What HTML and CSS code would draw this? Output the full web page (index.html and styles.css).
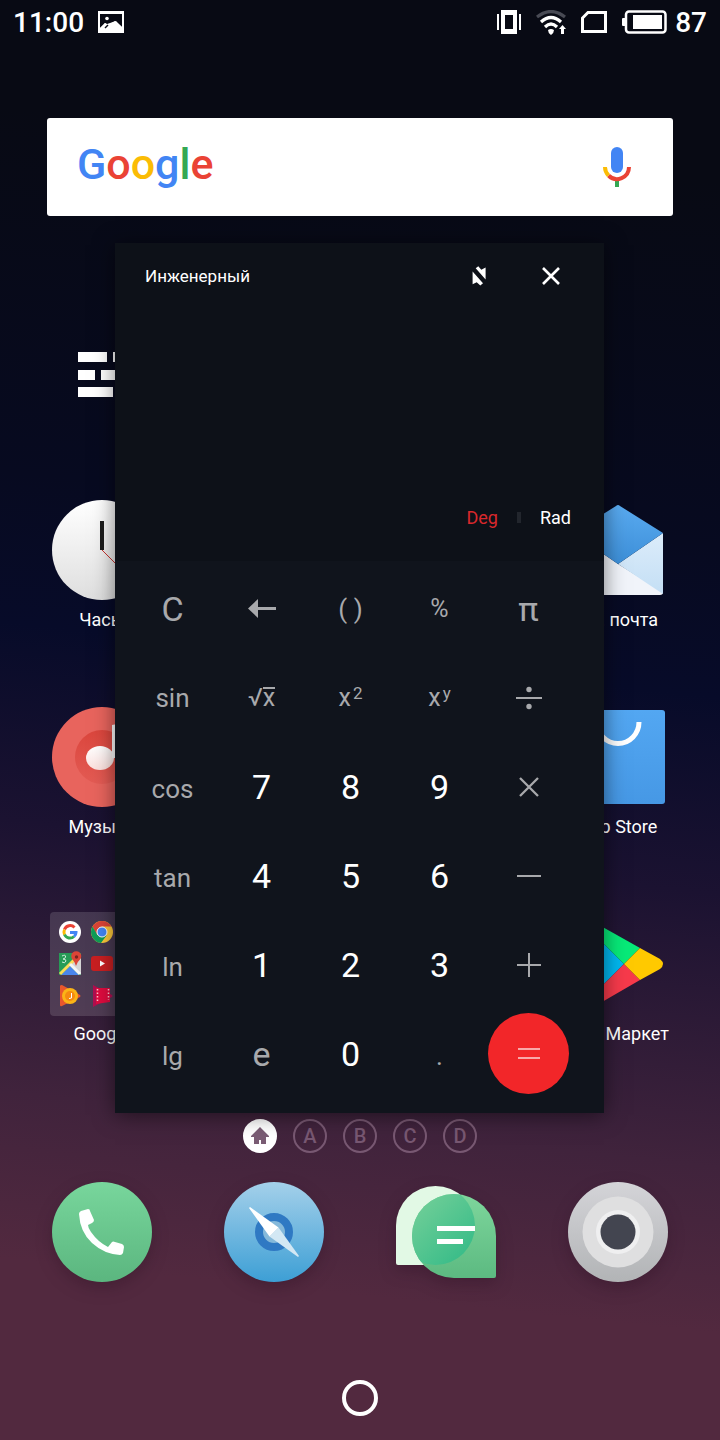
FILE: index.html
```html
<!DOCTYPE html>
<html lang="ru">
<head>
  <meta charset="UTF-8">
  <meta name="viewport" content="width=device-width, initial-scale=1.0">
  <title>Инженерный</title>
  <link rel="stylesheet" href="styles.css">
</head>
<body>
<div class="screen">

  <!-- Status bar -->
  <header class="status-bar">
    <span>11:00</span>
    <svg width="26" height="22" viewBox="0 0 26 22">
      <path fill="#fff" fill-rule="evenodd" d="M0 0H26V22H0zM2 3V17L7 12L10 14L17 10L24 16V3z"/>
      <path fill="#fff" d="M2 19V17L7 12L9 13L18 10L24 16V20H2z"/>
      <path stroke="#080a14" stroke-width="1.500" d="M7 17L10 14"/>
      <circle cx="9" cy="7.500" r="1.800" fill="#fff"/>
    </svg>
    <div class="status-icons">
      <svg width="24" height="24" viewBox="0 0 24 24" fill="#fff">
        <path fill-rule="evenodd" d="M4 0H20V24H4zM8 5V19H16V5z"/>
        <path d="M0 4H2V20H0zM22 4H24V20H22z"/>
      </svg>
      <svg width="30" height="25" viewBox="0 0 30 25" fill="none" stroke="#fff" stroke-width="3.200">
        <path stroke="#484a54" d="M1 7Q15 -4 29 7"/>
        <path d="M5 12Q15 3 25 12"/>
        <path d="M9 17Q15 11 21 17"/>
        <path fill="#fff" stroke="none" d="M12 20Q15 18 18 20Q18 23 15 25Q12 23 12 20zM23 19L26.500 15L30 19H28V24H25V19z"/>
      </svg>
      <svg width="26" height="22" viewBox="0 0 26 22" fill="none" stroke="#fff" stroke-width="3">
        <path d="M7 1.500H24.500V20.500H1.500V7z"/>
      </svg>
      <div class="battery">
        <svg width="45" height="24" viewBox="0 0 45 24">
          <rect x="4" y="1.500" width="39.500" height="21" rx="3" fill="none" stroke="#fff" stroke-width="2.500"/>
          <path fill="#fff" d="M0 9Q0 8 1 8H4V16H1Q0 16 0 15zM11 5H40V19H11z"/>
        </svg>
        <span>87</span>
      </div>
    </div>
  </header>

  <!-- Search widget -->
  <form class="search">
    <label class="logo" for="query"><span class="blue">G</span><span class="red">o</span><span class="yellow">o</span><span class="blue">g</span><span class="green">l</span><span class="red">e</span></label>
    <input class="query" id="query" type="search">
    <button class="mic" type="button" aria-label="Голосовой поиск">
      <svg width="28" height="40" viewBox="0 0 28 40" fill="none" stroke-width="4">
        <rect x="8" y="0" width="12" height="26" rx="6" fill="#4285f4"/>
        <path stroke="#34a853" d="M14 33V40"/>
        <path stroke="#ea4335" d="M26 20A12 12 0 0 1 5.500 28.500"/>
        <path stroke="#fbbc05" d="M2 20A12 12 0 0 0 5.500 28.500"/>
      </svg>
    </button>
  </form>

  <!-- Home screen apps -->
  <main class="apps">
    <a class="app widget left" href="#" aria-label="Виджет">
      <svg width="48" height="45" viewBox="0 0 48 45" fill="#fff">
        <path d="M0 0H29V10H0zM35 0H48V10H35zM0 18H17V28H0zM23 18H48V28H23zM0 35H35V45H0z"/>
      </svg>
    </a>

    <a class="app left" href="#">
      <svg width="100" height="100" viewBox="0 0 100 100">
        <defs>
          <linearGradient id="clock" x2="0" y2="1"><stop stop-color="#fff"/><stop offset="1" stop-color="#dedede"/></linearGradient>
        </defs>
        <circle cx="50" cy="50" r="50" fill="url(#clock)"/>
        <path fill="#1c1c1c" d="M48 21H52V50H48z"/>
        <path stroke="#c9342f" d="M50 50L78 78"/>
      </svg>
      <span>Часы</span>
    </a>
    <a class="app right" href="#">
      <svg width="100" height="100" viewBox="0 0 100 100">
        <defs>
          <linearGradient id="flap" x2="0" y2="1"><stop stop-color="#59aaf0"/><stop offset="1" stop-color="#3d8fd8"/></linearGradient>
          <linearGradient id="side" x2="0" y2="1"><stop stop-color="#dcecfa"/><stop offset="1" stop-color="#c4dff5"/></linearGradient>
        </defs>
        <path fill="#f1f4fa" d="M5 33L50 64L95 92Q95 95 92 95H8Q5 95 5 92z"/>
        <path fill="url(#side)" d="M95 33V94L50 64z"/>
        <path fill="url(#flap)" d="M48 6Q50 4 52 6L95 33L50 64L5 33z"/>
      </svg>
      <span>Эл. почта</span>
    </a>

    <a class="app left" href="#">
      <svg width="100" height="100" viewBox="0 0 100 100">
        <defs>
          <linearGradient id="disc" x2="0" y2="1"><stop stop-color="#db463d"/><stop offset="1" stop-color="#e35b54"/></linearGradient>
          <linearGradient id="note" x2="0" y2="1"><stop stop-color="#fff"/><stop offset="1" stop-color="#fbe0dd"/></linearGradient>
        </defs>
        <circle cx="50" cy="50" r="50" fill="#e8645d"/>
        <circle cx="50" cy="50" r="27" fill="url(#disc)"/>
        <ellipse cx="48" cy="51" rx="14" ry="12" fill="url(#note)"/>
        <path fill="#fff" d="M60 18L76 15V24L63 27V51H60z"/>
      </svg>
      <span>Музыка</span>
    </a>
    <a class="app right" href="#">
      <svg width="100" height="100" viewBox="0 0 100 100">
        <defs>
          <linearGradient id="bag" x2="0" y2="1"><stop stop-color="#53a7f2"/><stop offset="1" stop-color="#4698e5"/></linearGradient>
        </defs>
        <rect x="3" y="3" width="94" height="94" rx="3" fill="url(#bag)"/>
        <path fill="none" stroke="#fff" stroke-width="5" d="M29 15A21 21.500 0 0 0 71 15"/>
      </svg>
      <span>App Store</span>
    </a>

    <a class="app left" href="#">
      <svg class="folder" width="104" height="104" viewBox="0 0 104 104">
        <rect width="104" height="104" rx="4" fill="#fff" fill-opacity=".14"/>
        <!-- Google -->
        <circle cx="20" cy="20" r="11" fill="#fff"/>
        <g fill="none" stroke-width="3">
          <path stroke="#ea4335" d="M24.500 15.500A6 6 0 0 0 14.500 17.500"/>
          <path stroke="#fbbc05" d="M14.500 17.500A6 6 0 0 0 14.500 22.500"/>
          <path stroke="#34a853" d="M14.500 22.500A6 6 0 0 0 24 24.500"/>
          <path stroke="#4285f4" d="M24 24.500Q26 23 26 20.500H20"/>
        </g>
        <!-- Chrome -->
        <circle cx="52" cy="20" r="11" fill="#fdc93a"/>
        <path fill="#db4437" d="M42.500 14.500A11 11 0 0 1 61.500 14.500H52L46.500 22z"/>
        <path fill="#0f9d58" d="M42.500 14.500A11 11 0 0 0 51 31L56.500 23.500L47.500 23z"/>
        <circle cx="52" cy="20" r="5" fill="#4285f4" stroke="#fff"/>
        <!-- Maps -->
        <rect x="9" y="41" width="22" height="22" fill="#279b57"/>
        <path fill="#d5d5d5" d="M31 46V63L20 52z"/>
        <path fill="#4a86ec" d="M11 63L20 54L29 63z"/>
        <path stroke="#fbdc58" stroke-width="3" d="M10 62L27 45"/>
        <path stroke="#f4f4f4" stroke-width="3" d="M20 52L30 62"/>
        <path fill="none" stroke="#d5f0df" d="M12 44Q16 42 15.500 45Q15 47 13 47Q16 47 16 49Q15 52 12 50"/>
        <path fill="#db4437" d="M26 54Q25 50 22.500 47.500A5 5 0 1 1 30 47.500Q27 50 26 54z"/>
        <circle cx="26.500" cy="45" r="1.700" fill="#7b231e"/>
        <!-- YouTube -->
        <rect x="41" y="44" width="22" height="15" rx="3" fill="#c91f21"/>
        <path fill="#fff" d="M50 48.500L55 51.500L50 54.500z"/>
        <!-- Play Music -->
        <path fill="#e8572c" d="M10 74Q10 73 12 73L30 83Q31 84 30 85L12 94Q10 95 10 93z"/>
        <circle cx="20" cy="84" r="8" fill="#fbb416"/>
        <circle cx="20" cy="84" r="5" fill="#f58a10"/>
        <path fill="none" stroke="#fff" d="M21.500 81V86L19 86.500"/>
        <!-- Play Movies -->
        <path fill="#b00e4f" d="M43 73L62 83Q63 84 62 85L43 95z"/>
        <path fill="#df0b3f" d="M46 76H60V90L46 92z"/>
        <path stroke="#ffc2d0" stroke-width="1.500" stroke-dasharray="1.500 2" d="M47.500 77V91M58.500 77V88"/>
      </svg>
      <span>Google</span>
    </a>
    <a class="app right" href="#">
      <svg width="100" height="100" viewBox="0 0 100 100">
        <path fill="#00b8f0" d="M10 4L56 50L10 96Z"/>
        <path fill="#07ea78" d="M10 4Q11 0 15 2L72 34L56 50z"/>
        <path fill="#f73a4b" d="M10 96Q11 102 15 99L72 66L56 50z"/>
        <path fill="#ffc900" d="M72 34L92 45Q98 50 92 55L72 66L56 50z"/>
      </svg>
      <span>Play Маркет</span>
    </a>
  </main>

  <!-- Page indicator -->
  <nav class="pages">
    <a class="page active" href="#" aria-label="Домой">
      <svg width="18" height="18" viewBox="0 0 18 18" fill="#7a5c74">
        <path d="M9 0L18 9V10H15V17H10V13H8V17H3V10H0V9z"/>
      </svg>
    </a>
    <a class="page" href="#">A</a>
    <a class="page" href="#">B</a>
    <a class="page" href="#">C</a>
    <a class="page" href="#">D</a>
  </nav>

  <!-- Dock -->
  <nav class="dock">
    <a href="#" aria-label="Телефон">
      <svg width="100" height="100" viewBox="0 0 100 100">
        <defs>
          <linearGradient id="phone" x2="0" y2="1"><stop stop-color="#78d69c"/><stop offset="1" stop-color="#5bb67f"/></linearGradient>
        </defs>
        <circle cx="50" cy="50" r="50" fill="url(#phone)"/>
        <path fill="#fff" d="M27 32Q27 30 29 29L36 27Q38 27 38 29L42 38Q42 40 40 41L36 43Q36 46 39 50Q46 60 56 65L60 60Q61 59 63 60L70 62Q72 63 72 65L71 71Q70 73 68 73Q52 72 40 61Q28 50 27 32z"/>
      </svg>
    </a>
    <a href="#" aria-label="Браузер">
      <svg width="100" height="100" viewBox="0 0 100 100">
        <defs>
          <linearGradient id="browser" x2="0" y2="1"><stop stop-color="#a4d0ea"/><stop offset="1" stop-color="#3d9fd5"/></linearGradient>
        </defs>
        <circle cx="50" cy="50" r="50" fill="url(#browser)"/>
        <circle cx="50" cy="50" r="15" fill="#85b9da" stroke="#2f79c3" stroke-width="8"/>
        <path fill="#d3e8f4" d="M54.500 45.500L75 74L74 75L45.500 54.500z"/>
        <path fill="#fff" d="M25 26L26 25L54.500 45.500L50 50L45.500 54.500z"/>
      </svg>
    </a>
    <a href="#" aria-label="Сообщения">
      <svg width="100" height="100" viewBox="0 0 100 100">
        <defs>
          <linearGradient id="chat" x2="0" y2="1"><stop stop-color="#7ed69c"/><stop offset="1" stop-color="#5cba81"/></linearGradient>
          <linearGradient id="overlap" x2="1" y2="1"><stop stop-color="#84d59d"/><stop offset="1" stop-color="#2fb986"/></linearGradient>
          <clipPath id="front"><circle cx="58" cy="54" r="42"/></clipPath>
        </defs>
        <path fill="#e2f9e5" d="M0 43.500A39.500 39.500 0 1 1 39.500 83H2Q0 83 0 81z"/>
        <path fill="url(#chat)" d="M100 54A42 42 0 1 0 58 96H98Q100 96 100 94z"/>
        <circle cx="39.500" cy="43.500" r="39.500" fill="url(#overlap)" clip-path="url(#front)"/>
        <path fill="#fff" d="M41 44H79V49H41zM41 57H67V62H41z"/>
      </svg>
    </a>
    <a href="#" aria-label="Камера">
      <svg width="100" height="100" viewBox="0 0 100 100">
        <defs>
          <linearGradient id="camera" x2="0" y2="1"><stop stop-color="#d4d4d8"/><stop offset="1" stop-color="#b2b4b6"/></linearGradient>
        </defs>
        <circle cx="50" cy="50" r="50" fill="url(#camera)"/>
        <circle cx="50" cy="50" r="35.500" fill="#dfdfe0"/>
        <circle cx="50" cy="50" r="22" fill="#efeff0"/>
        <circle cx="50" cy="50" r="17.500" fill="#434550"/>
      </svg>
    </a>
  </nav>

  <footer class="nav-bar">
    <button class="home-button" type="button" aria-label="Домой"></button>
  </footer>

  <!-- Floating calculator -->
  <section class="calculator">
    <div class="display">
      <div class="title-bar">
        <h1>Инженерный</h1>
        <button type="button" aria-label="Закрепить">
          <svg width="14" height="20" viewBox="0 0 14 20" fill="#fff">
            <path d="M3.700 2.300L6.300 .3L9.300 3.700L13.600 1.600V13.600zM.6 5.600V18.300L4.700 16.300L8.300 19.600L11 17.300z"/>
          </svg>
        </button>
        <button type="button" aria-label="Закрыть">
          <svg width="18" height="18" viewBox="0 0 18 18" stroke="#fff" stroke-width="2.600">
            <path d="M1 1L17 17M17 1L1 17"/>
          </svg>
        </button>
      </div>
      <div class="units">
        <button class="on" type="button">Deg</button>
        <span class="divider"></span>
        <button type="button">Rad</button>
      </div>
    </div>

    <div class="keypad">
      <button type="button">C</button>
      <button type="button" aria-label="Удалить">
        <svg width="28" height="19" viewBox="0 0 28 19" fill="#a8a9ac"><path d="M0 9.500L10 0V8H28V11H10V19z"/></svg>
      </button>
      <button type="button"><span class="fn">( )</span></button>
      <button type="button"><span class="small">%</span></button>
      <button type="button">π</button>

      <button type="button"><span class="fn">sin</span></button>
      <button type="button"><span class="small">√<span class="root">x</span></span></button>
      <button type="button"><span class="small">x<sup>2</sup></span></button>
      <button type="button"><span class="small">x<sup>y</sup></span></button>
      <button type="button" aria-label="Разделить">
        <svg width="26" height="24" viewBox="0 0 26 24" fill="#a8a9ac"><path d="M0 11H26V13H0z"/><circle cx="13" cy="3.500" r="2.700"/><circle cx="13" cy="20.500" r="2.700"/></svg>
      </button>

      <button type="button"><span class="fn low">cos</span></button>
      <button class="digit" type="button">7</button>
      <button class="digit" type="button">8</button>
      <button class="digit" type="button">9</button>
      <button type="button" aria-label="Умножить">
        <svg width="20" height="20" viewBox="0 0 20 20" stroke="#a8a9ac" stroke-width="2.300"><path d="M1 1L19 19M19 1L1 19"/></svg>
      </button>

      <button type="button"><span class="fn low">tan</span></button>
      <button class="digit" type="button">4</button>
      <button class="digit" type="button">5</button>
      <button class="digit" type="button">6</button>
      <button type="button" aria-label="Вычесть">
        <svg width="24" height="24" viewBox="0 0 24 24" fill="#a8a9ac"><path d="M0 11H24V13H0z"/></svg>
      </button>

      <button type="button"><span class="fn low">ln</span></button>
      <button class="digit" type="button">1</button>
      <button class="digit" type="button">2</button>
      <button class="digit" type="button">3</button>
      <button type="button" aria-label="Сложить">
        <svg width="24" height="24" viewBox="0 0 24 24" fill="#a8a9ac"><path d="M0 11H11V0H13V11H24V13H13V24H11V13H0z"/></svg>
      </button>

      <button type="button"><span class="fn low">lg</span></button>
      <button type="button">e</button>
      <button class="digit" type="button">0</button>
      <button type="button"><span class="fn low">.</span></button>
      <button class="equals" type="button" aria-label="Равно">
        <svg width="22" height="12" viewBox="0 0 22 12" fill="#f9a8a9"><path d="M0 0H22V2H0zM0 9H22V11H0z"/></svg>
      </button>
    </div>
  </section>

</div>
</body>
</html>
```
FILE: styles.css
```css
/* General */
* {
  box-sizing: border-box;
}

body {
  margin: 0;
  font-family: Roboto, "Noto Sans", sans-serif;
  color: #fff;
}

svg {
  display: block;
  flex: none;
}

button {
  padding: 0;
  border: none;
  background: none;
  color: inherit;
  font-family: inherit;
  cursor: pointer;
}

a {
  color: inherit;
  text-decoration: none;
}

.screen {
  position: relative;
  display: flex;
  flex-direction: column;
  min-height: 100vh;
  background: linear-gradient(186deg, #080a14 12%, #070a20 36%, #070b29 46%, #1b1231 59%, #40233c 77%, #52293f 88%);
}

/* Status bar */
.status-bar {
  display: flex;
  align-items: center;
  gap: 14px;
  height: 44px;
  padding: 0 13px;
  font-size: 28px;
  font-weight: 500;
}

.status-icons {
  display: flex;
  align-items: center;
  gap: 15px;
  margin-left: auto;
}

.battery {
  display: flex;
  align-items: center;
  gap: 8px;
}

/* Search */
.search {
  display: flex;
  align-items: center;
  height: 98px;
  margin: 74px 47px 0;
  padding: 0 42px 0 30px;
  border-radius: 3px;
  background-color: #fff;
}

.logo {
  padding-bottom: 6px;
  font-size: 43px;
  font-weight: 500;
}

.blue { color: #4285f4; }
.red { color: #ea4335; }
.yellow { color: #fbbc05; }
.green { color: #34a853; }

.query {
  flex: 1;
  min-width: 0;
  height: 60px;
  margin: 0 16px;
  border: none;
  outline: none;
  background: none;
  font-size: 28px;
}

/* Apps */
.apps {
  display: grid;
  grid-template-columns: repeat(4, 1fr);
  row-gap: 76px;
  margin-top: 77px;
  padding: 0 16px;
}

.app {
  display: flex;
  flex-direction: column;
  align-items: center;
  gap: 8px;
  height: 131px;
  font-size: 18px;
  line-height: 24px;
  white-space: nowrap;
}

.left {
  grid-column: 1;
}

.right {
  grid-column: 4;
}

.widget {
  padding-top: 59px;
}

.folder {
  margin: -2px;
}

/* Page indicator */
.pages {
  display: flex;
  justify-content: center;
  gap: 16px;
  margin-top: 74px;
}

.page {
  display: flex;
  align-items: center;
  justify-content: center;
  width: 34px;
  height: 34px;
  border: 2px solid #785872;
  border-radius: 50%;
  color: #785872;
  font-size: 20px;
  font-weight: 500;
}

.page.active {
  border-color: #fff;
  background-color: #fff;
}

/* Dock */
.dock {
  display: grid;
  grid-template-columns: repeat(4, 1fr);
  justify-items: center;
  margin-top: 29px;
  padding: 0 16px;
}

.dock svg {
  filter: drop-shadow(0 6px 8px rgba(40, 10, 30, 0.3));
}

.nav-bar {
  display: flex;
  justify-content: center;
  margin-top: auto;
  padding: 24px;
}

.home-button {
  width: 36px;
  height: 36px;
  border: 4px solid #fff;
  border-radius: 50%;
}

/* Calculator window */
.calculator {
  position: absolute;
  top: 243px;
  left: 115px;
  right: 116px;
  background-color: #10141c;
  box-shadow: 0 2px 20px rgba(0, 0, 0, 0.5);
}

.display {
  display: flex;
  flex-direction: column;
  justify-content: space-between;
  height: 318px;
  background-color: #0d1118;
}

.title-bar {
  display: flex;
  align-items: center;
  height: 66px;
  padding: 0 17px 0 30px;
}

.title-bar h1 {
  flex: 1;
  margin: 0;
  font-size: 17px;
  font-weight: 400;
}

.title-bar button {
  display: flex;
  align-items: center;
  justify-content: center;
  width: 72px;
  height: 66px;
}

.units {
  display: flex;
  align-items: center;
  justify-content: flex-end;
  gap: 19px;
  height: 88px;
  padding-right: 33px;
}

.units button {
  font-size: 18px;
}

.units .on {
  color: #d9282c;
}

.divider {
  width: 4px;
  height: 11px;
  background-color: #22262d;
}

.keypad {
  display: grid;
  grid-template-columns: repeat(5, 1fr);
  grid-auto-rows: 89px;
  padding: 3px 31px 15px 13px;
}

.keypad button {
  display: grid;
  place-content: center;
  color: #a8a9ac;
  font-size: 34px;
  line-height: 40px;
}

.keypad .digit {
  color: #fff;
}

.fn {
  font-size: 26px;
}

.low {
  padding-top: 5px;
}

.small {
  font-size: 25px;
}

.small sup {
  margin-left: 2px;
  font-size: 17px;
  line-height: 1;
  vertical-align: 7px;
}

.root {
  display: inline-block;
  border-top: 2px solid #a8a9ac;
  line-height: 18px;
}

.keypad .equals {
  place-self: center;
  width: 81px;
  height: 81px;
  border-radius: 50%;
  background-color: #f22629;
}
```
